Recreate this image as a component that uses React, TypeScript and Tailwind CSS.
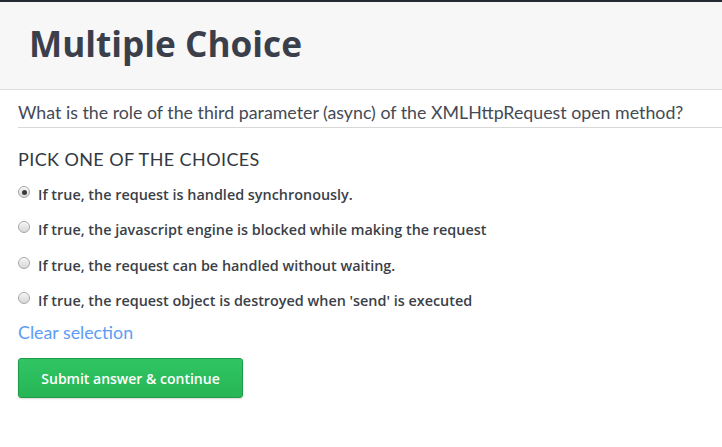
import React from "react";

const options = [
  "If true, the request is handled synchronously.",
  "If true, the javascript engine is blocked while making the request",
  "If true, the request can be handled without waiting.",
  "If true, the request object is destroyed when 'send' is executed",
];

function Radio({ checked }: { checked: boolean }) {
  return (
    <span className="flex h-[12px] w-[12px] shrink-0 items-center justify-center rounded-full border border-[#a6a6a6] bg-gradient-to-b from-[#f4f4f4] to-[#d8d8d8] shadow-[inset_0_1px_1px_rgba(255,255,255,0.8)]">
      {checked && <span className="h-[5px] w-[5px] rounded-full bg-[#3a3a3a]" />}
    </span>
  );
}

export default function App() {
  return (
    <div className="min-h-[447px] w-[722px] bg-white">
      <div className="h-[2px] bg-[#262a33]" />
      <div className="flex h-[88px] items-start border-b border-[#dedede] bg-[#f7f7f7] pl-[29px] pt-[16px]">
        <h1 className="font-['Open_Sans',sans-serif] text-[35.2px] font-bold leading-[50px] text-[#3a3f4b]">
          Multiple Choice
        </h1>
      </div>
      <div className="pl-[18px]">
        <div className="border-b border-[#d8d8d8] pb-[3px] pt-[10px] font-['Lato',sans-serif] text-[17.8px] leading-[24px] text-[#444a55]">
          What is the role of the third parameter (async) of the XMLHttpRequest open method?
        </div>
        <div className="mt-[19px] font-['Lato',sans-serif] text-[18px] leading-[24px] tracking-[0.4px] text-[#333842]">
          PICK ONE OF THE CHOICES
        </div>
        <div className="mt-[14px] flex flex-col gap-[15.4px]">
          {options.map((o, i) => (
            <div key={o} className="flex h-[20px] items-center">
              <span className="mb-[6px]">
                <Radio checked={i === 0} />
              </span>
              <span className="ml-[8px] font-['Open_Sans',sans-serif] text-[14.4px] font-semibold leading-[20px] text-[#3b3f48]">
                {o}
              </span>
            </div>
          ))}
        </div>
        <div className="mt-[9px] font-['Lato',sans-serif] text-[17.8px] leading-[24px] text-[#5d9cf2]">
          Clear selection
        </div>
        <button className="mt-[14px] flex h-[40px] w-[225px] items-center justify-center rounded-[3px] border border-[#1f9b48] bg-gradient-to-b from-[#30c564] to-[#27b556] font-['Open_Sans',sans-serif] text-[14px] font-semibold text-white shadow-[0_1px_2px_rgba(0,0,0,0.15)]">
          Submit answer &amp; continue
        </button>
      </div>
    </div>
  );
}
